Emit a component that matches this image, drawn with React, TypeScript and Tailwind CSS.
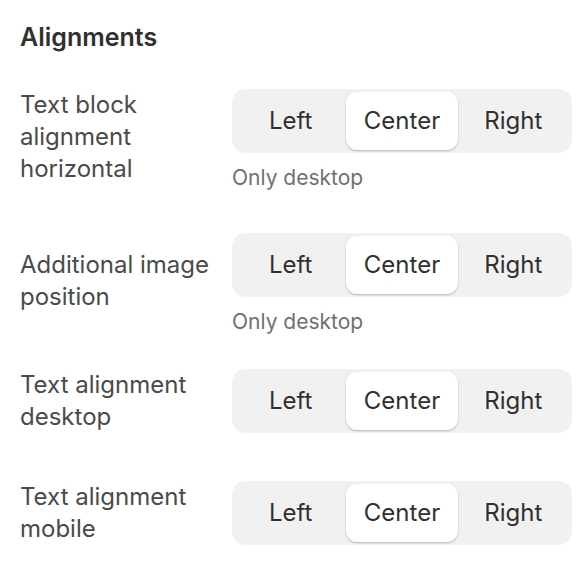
import React from "react";

function Segmented() {
  return (
    <div className="grid w-[340px] grid-cols-3 rounded-[14px] bg-[#f1f1f1] p-[3px] text-[24px] text-[#303030]">
      <div className="flex h-[58px] items-center justify-center">Left</div>
      <div className="flex h-[58px] items-center justify-center rounded-[11px] bg-white shadow-[0_1px_2px_rgba(0,0,0,0.25)]">Center</div>
      <div className="flex h-[58px] items-center justify-center">Right</div>
    </div>
  );
}

function Row({
  label,
  helper,
  className,
  labelClass,
}: {
  label: React.ReactNode;
  helper?: boolean;
  className?: string;
  labelClass?: string;
}) {
  return (
    <div className={"flex " + (helper ? "items-start " : "items-center ") + (className ?? "")}>
      <div className={"w-[212px] shrink-0 text-[24px] leading-[32px] text-[#4a4a4a] " + (labelClass ?? "")}>{label}</div>
      <div className="flex shrink-0 flex-col">
        <Segmented />
        {helper && <div className="mt-[9px] text-[21px] leading-[32px] text-[#707070]">Only desktop</div>}
      </div>
    </div>
  );
}

export default function App() {
  return (
    <div className="min-h-[586px] bg-white px-5 pt-[21px] font-['Inter',sans-serif]">
      <h2 className="text-[25px] font-semibold leading-[32px] text-[#303030]">Alignments</h2>
      <Row className="mt-[36px]" label={<>Text block<br />alignment<br />horizontal</>} helper />
      <Row className="mt-[39px]" labelClass="mt-[16px]" label={<>Additional image<br />position</>} helper />
      <Row className="mt-[31px]" label={<>Text alignment<br />desktop</>} />
      <Row className="mt-[48px]" label={<>Text alignment<br />mobile</>} />
    </div>
  );
}
